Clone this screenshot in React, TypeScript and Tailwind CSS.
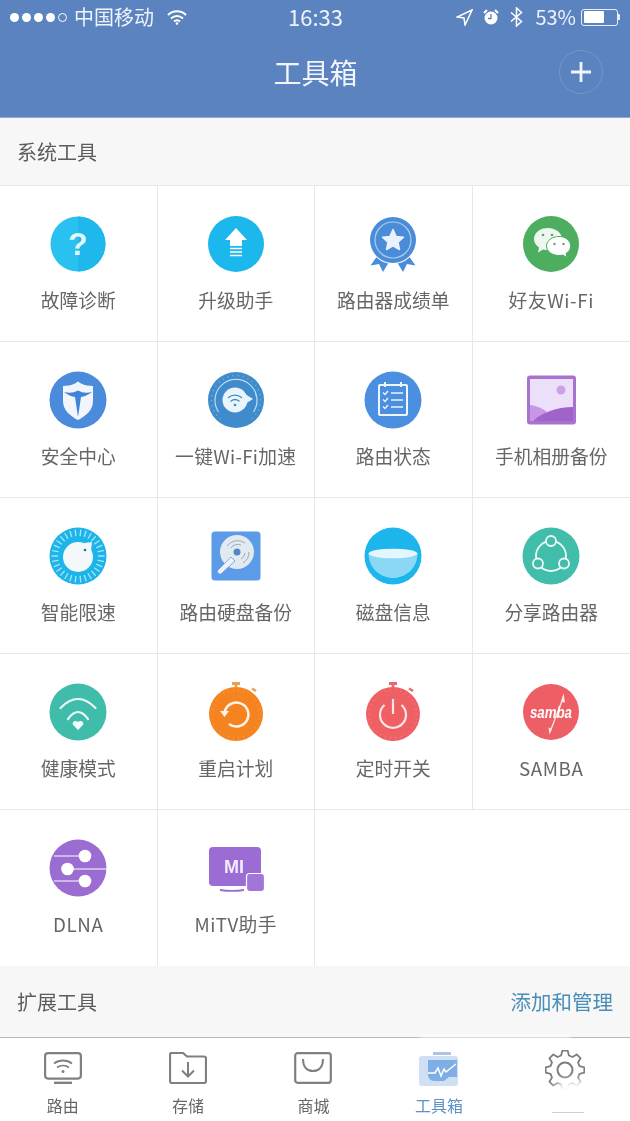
import React from "react";

const FONT = "font-['Noto_Sans_CJK_SC','Noto_Sans',sans-serif]";

function polar(cx: number, cy: number, r: number, deg: number): [number, number] {
  const a = (deg * Math.PI) / 180;
  return [cx + r * Math.cos(a), cy + r * Math.sin(a)];
}

function Ticks({ cx = 30, cy = 30, r1, r2, n, from = 0, to = 360, color = "#fff", w = 1, op = 1 }: { cx?: number; cy?: number; r1: number; r2: number; n: number; from?: number; to?: number; color?: string; w?: number; op?: number }) {
  return (
    <g stroke={color} strokeWidth={w} opacity={op} strokeLinecap="round">
      {Array.from({ length: n }).map((_, i) => {
        const d = from + ((to - from) * i) / n;
        const [x1, y1] = polar(cx, cy, r1, d);
        const [x2, y2] = polar(cx, cy, r2, d);
        return <line key={i} x1={x1} y1={y1} x2={x2} y2={y2} />;
      })}
    </g>
  );
}

function Svg({ children }: { children: React.ReactNode }) {
  return (
    <svg width="60" height="60" viewBox="0 0 60 60" className="block overflow-visible">
      {children}
    </svg>
  );
}

const icons: Record<string, React.ReactNode> = {
  help: (
    <Svg>
      <circle cx="30" cy="30" r="27.5" fill="#29c1ef" />
      <path d="M30 2.5a27.5 27.5 0 0 1 0 55z" fill="#1eb8ec" />
      <text x="30" y="41" textAnchor="middle" fontSize="32" fontWeight="700" fill="#e4f7fd" fontFamily="Liberation Sans, sans-serif">?</text>
    </Svg>
  ),
  up: (
    <Svg>
      <circle cx="30" cy="30" r="28" fill="#1cb7ec" />
      <path d="M30 14 41 26H36V32H24V26H19z" fill="#fff" />
      <path d="M24 34.5H36M24 38H36M24 41.5H36" stroke="#fff" strokeWidth="1.6" />
    </Svg>
  ),
  medal: (
    <Svg>
      <path d="M15 41 7.500 51.500 16 50 20 58 26 48z" fill="#4a8cd8" />
      <path d="M45 41 52.500 51.500 44 50 40 58 34 48z" fill="#4a8cd8" />
      <circle cx="30" cy="26" r="24" fill="#fff" />
      <circle cx="30" cy="26" r="23" fill="#4a8cd8" />
      <circle cx="30" cy="26" r="18" fill="none" stroke="#a9cdf3" strokeWidth="1.200" />
      <path d="M30 15.500 33.200 22.500 40.500 23.300 35 28.300 36.500 35.500 30 31.800 23.500 35.500 25 28.300 19.500 23.300 26.800 22.500z" fill="#e9f2fc" strokeLinejoin="round" stroke="#e9f2fc" strokeWidth="1.500" />
    </Svg>
  ),
  wechat: (
    <Svg>
      <circle cx="30" cy="30" r="28" fill="#4dae5f" />
      <path d="M27 14c-8 0-14 4.800-14 11 0 3.500 2 6.500 5 8.500l-1 5 5-3c1.600.4 3.300.6 5 .6 8 0 14-5 14-11s-6-11.100-14-11.100z" fill="#edf7ef" />
      <path d="M38 22.500c-7 0-12.500 4.200-12.500 9.500s5.500 9.500 12.500 9.500c1.300 0 2.600-.2 3.800-.5l4.200 2.500-1-4c2.900-1.800 4.700-4.500 4.700-7.500 0-5.300-5.700-9.500-10.700-9.500z" fill="#fff" stroke="#4dae5f" strokeWidth="1" />
      <circle cx="22" cy="21" r="1.300" fill="#56a868" />
      <circle cx="31" cy="21" r="1.300" fill="#56a868" />
      <circle cx="33.500" cy="30" r="1.200" fill="#56a868" />
      <circle cx="42.500" cy="30" r="1.200" fill="#56a868" />
    </Svg>
  ),
  shield: (
    <Svg>
      <circle cx="30" cy="30" r="28.500" fill="#4a8bdb" />
      <path d="M30 11.500l3 2c4 1.800 8 2.500 12 2.500v15c0 9-7 15-15 19-8-4-15-10-15-19V16c4 0 8-.7 12-2.500z" fill="#f2f6fc" />
      <path d="M16 22Q24 24 30 20.500 36 24 44 22 38 26.500 33 27L30 47 27 27Q22 26.500 16 22z" fill="#3f84d6" />
    </Svg>
  ),
  gauge: (
    <Svg>
      <circle cx="30" cy="30" r="28" fill="#3f8bcb" />
      <Ticks r1={24} r2={25} n={24} from={130} to={420} color="#9fd0ee" op={0.6} />
      <path d="M12.500 42A21 21 0 1 1 47.500 42" fill="none" stroke="#b9def4" strokeWidth="1.200" />
      <circle cx="29" cy="30" r="12.500" fill="#e9f5fb" />
      <path d="M39 24 47 29 39 34z" fill="#e9f5fb" />
      <path d="M22.500 27.500c3.800-3.200 9.200-3.200 13 0M25 31c2.400-1.900 5.600-1.900 8 0" fill="none" stroke="#3f8bcb" strokeWidth="1.400" strokeLinecap="round" />
      <circle cx="29" cy="35" r="1.300" fill="#3f8bcb" />
    </Svg>
  ),
  note: (
    <Svg>
      <circle cx="30" cy="30" r="28.500" fill="#4a8fe0" />
      <rect x="16" y="15" width="28" height="30" rx="1" fill="none" stroke="#eef5fc" strokeWidth="2" />
      <path d="M22 12V17M38 12V17" stroke="#eef5fc" strokeWidth="2" />
      <path d="M20 22.500 22 24.500 25 21M20 29.500 22 31.500 25 28M20 36.500 22 38.500 25 35" fill="none" stroke="#eef5fc" strokeWidth="1.400" />
      <path d="M28 23H40M28 30H40M28 37H40" stroke="#eef5fc" strokeWidth="1.500" />
    </Svg>
  ),
  photo: (
    <Svg>
      <rect x="6" y="5.500" width="49" height="49" rx="3" fill="#a873cf" />
      <rect x="9" y="9" width="43" height="42" fill="#ecdffa" />
      <circle cx="40" cy="20" r="4.500" fill="#c9a2e6" />
      <path d="M9 35c6 .5 12 3 17 7L12 51H9z" fill="#c796e6" />
      <path d="M12 51c8-8 24-14 40-14V51z" fill="#a063ca" />
    </Svg>
  ),
  limit: (
    <Svg>
      <circle cx="30" cy="30" r="28.500" fill="#1db4e9" />
      <Ticks r1={20.500} r2={26} n={30} color="#a9e5fa" w={1.300} />
      <circle cx="30" cy="31" r="15" fill="#f3f9fb" />
      <path d="M36 17 44 16 43 25z" fill="#f3f9fb" />
      <circle cx="37" cy="24" r="1.300" fill="#22718e" />
    </Svg>
  ),
  hdd: (
    <Svg>
      <rect x="5.500" y="5.500" width="49" height="49" rx="3.500" fill="#5b9be8" />
      <circle cx="31" cy="26" r="17" fill="#e2e9f0" />
      <path d="M21 20a13 13 0 0 1 18-3M43 26a13 13 0 0 1-6 11M25 22a8 8 0 0 1 10-3M39 27a8 8 0 0 1-4 6" fill="none" stroke="#98aabd" strokeWidth="1" />
      <circle cx="31" cy="26" r="3.500" fill="#5388c8" />
      <path d="M25 31 29 35 15.500 47.500c-2 1.800-5.500-1.500-3.500-3.500z" fill="#eef2f6" stroke="#5b9be8" strokeWidth=".8" />
    </Svg>
  ),
  bowl: (
    <Svg>
      <circle cx="30" cy="30" r="28.500" fill="#1cb6ec" />
      <path d="M5.500 28C10 24 50 24 54.500 28 54 43 42 52 30 52S6 43 5.500 28z" fill="#8bd8f6" />
      <ellipse cx="30" cy="27.500" rx="24.500" ry="4.800" fill="#e3f6fd" />
    </Svg>
  ),
  share: (
    <Svg>
      <circle cx="30" cy="30" r="28.500" fill="#40bdab" />
      <circle cx="30" cy="30" r="15" fill="none" stroke="#effaf8" strokeWidth="1.800" />
      <circle cx="30" cy="15" r="5" fill="#43bcab" stroke="#effaf8" strokeWidth="1.800" />
      <circle cx="17" cy="37.500" r="5" fill="#43bcab" stroke="#effaf8" strokeWidth="1.800" />
      <circle cx="43" cy="37.500" r="5" fill="#43bcab" stroke="#effaf8" strokeWidth="1.800" />
    </Svg>
  ),
  health: (
    <Svg>
      <circle cx="30" cy="30" r="28.500" fill="#40bcab" />
      <path d="M12.500 26Q30 8 47.500 26M20 37Q30 23 40 37" fill="none" stroke="#eefaf7" strokeWidth="2.200" strokeLinecap="round" />
      <path d="M30 48 25.200 43c-2-3 2.300-5.500 4.800-3 2.500-2.500 6.800 0 4.800 3z" fill="#f6fcfb" />
    </Svg>
  ),
  restart: (
    <Svg>
      <path d="M26 1.500H34M30 1.500V5" stroke="#e9a054" strokeWidth="2.800" />
      <path d="M46 6.500 50 9" stroke="#e9a054" strokeWidth="2.500" />
      <circle cx="30" cy="32" r="27" fill="#f58420" />
      <Ticks cy={32} r1={23} r2={24.500} n={30} color="#fbc48f" w={.8} op={0.35} />
      <path d="M18.500 31A12 12 0 1 1 23 42" fill="none" stroke="#fdf3e8" strokeWidth="2.500" />
      <path d="M14 29 23 29 18.500 35z" fill="#fdf3e8" />
    </Svg>
  ),
  timer: (
    <Svg>
      <path d="M26 1.500H34M30 1.500V5" stroke="#e46b70" strokeWidth="2.800" />
      <path d="M46 6.500 50 9" stroke="#e46b70" strokeWidth="2.500" />
      <circle cx="30" cy="32" r="27" fill="#ef6064" />
      <Ticks cy={32} r1={23} r2={24.500} n={30} color="#f9b1b3" w={.8} op={0.35} />
      <path d="M21.500 23A13 13 0 1 0 38.500 23" fill="none" stroke="#fbe6e6" strokeWidth="2.200" />
      <path d="M30 17V32" stroke="#fbe6e6" strokeWidth="2.200" />
    </Svg>
  ),
  samba: (
    <Svg>
      <circle cx="30" cy="30" r="28" fill="#ee5f65" />
      <path d="M42.500 15 29 50" stroke="#fbe7e8" strokeWidth="1.300" />
      <path d="M42.500 11 40 20 44 20.500zM28.500 52.500 27.500 45.500 31 46.500z" fill="#fbe7e8" />
      <text x="30" y="36" textAnchor="middle" fontSize="17" fontWeight="700" fontStyle="italic" fill="#fff" textLength="42" lengthAdjust="spacingAndGlyphs" fontFamily="Liberation Sans, sans-serif">samba</text>
    </Svg>
  ),
  dlna: (
    <Svg>
      <circle cx="30" cy="30" r="28.500" fill="#9b6dd2" />
      <path d="M6 18H37M19 31H59M6 43H37" stroke="#fff" strokeWidth="1.200" />
      <circle cx="37" cy="18" r="6.300" fill="#fff" />
      <circle cx="19.500" cy="31" r="6.300" fill="#fff" />
      <circle cx="37" cy="43" r="6.300" fill="#fff" />
    </Svg>
  ),
  mitv: (
    <Svg>
      <rect x="3" y="9" width="52" height="39" rx="4" fill="#9a6cd4" />
      <path d="M14 52c8 1.200 16 1.200 24 0" stroke="#9a6cd4" strokeWidth="1.800" fill="none" />
      <rect x="40.500" y="35.500" width="18" height="18" rx="3" fill="#a276d8" stroke="#fff" strokeWidth="1.200" />
      <text x="28" y="35" textAnchor="middle" fontSize="18" fontWeight="700" fill="#f3ecfb" textLength="20" lengthAdjust="spacingAndGlyphs" fontFamily="Liberation Sans, sans-serif">MI</text>
    </Svg>
  ),
};

const tools: { label: string; icon: string; track?: string }[] = [
  { label: "故障诊断", icon: "help" },
  { label: "升级助手", icon: "up" },
  { label: "路由器成绩单", icon: "medal" },
  { label: "好友Wi-Fi", icon: "wechat", track: "tracking-[0.6px]" },
  { label: "安全中心", icon: "shield" },
  { label: "一键Wi-Fi加速", icon: "gauge", track: "tracking-[0.3px]" },
  { label: "路由状态", icon: "note" },
  { label: "手机相册备份", icon: "photo" },
  { label: "智能限速", icon: "limit" },
  { label: "路由硬盘备份", icon: "hdd" },
  { label: "磁盘信息", icon: "bowl" },
  { label: "分享路由器", icon: "share" },
  { label: "健康模式", icon: "health" },
  { label: "重启计划", icon: "restart" },
  { label: "定时开关", icon: "timer" },
  { label: "SAMBA", icon: "samba", track: "tracking-[0.6px]" },
  { label: "DLNA", icon: "dlna", track: "tracking-[0.6px]" },
  { label: "MiTV助手", icon: "mitv", track: "tracking-[0.4px]" },
];

function StatusBar() {
  return (
    <div className="grid h-[34px] grid-cols-[1fr_auto_1fr] items-center px-[10px] text-[19px] leading-none text-[#eef3fa]">
      <div className="flex items-center">
        <div className="flex items-center gap-[3px]">
          {[0, 1, 2, 3].map((i) => (
            <span key={i} className="h-[9px] w-[9px] rounded-full bg-white" />
          ))}
          <span className="h-[9px] w-[9px] rounded-full border border-white" />
        </div>
        <span className="ml-[7px] text-[20px]">中国移动</span>
        <svg width="20" height="16" viewBox="0 0 20 16" className="ml-[13px]">
          <path d="M1 6c5-5 13-5 18 0M4 9.500c3.500-3.200 8.500-3.200 12 0M7 12.500c1.800-1.500 4.200-1.500 6 0" fill="none" stroke="#fff" strokeWidth="2" />
          <circle cx="10" cy="14.500" r="1.300" fill="#fff" />
        </svg>
      </div>
      <div className="-mt-[3px] ml-px text-[22px] font-normal">16:33</div>
      <div className="flex items-center justify-end">
        <svg width="17" height="17" viewBox="0 0 17 17">
          <path d="M16 1 1 8l7 1 1 7z" fill="none" stroke="#fff" strokeWidth="1.500" />
        </svg>
        <svg width="16" height="17" viewBox="0 0 16 17" className="ml-[10px]">
          <circle cx="8" cy="9" r="6.500" fill="#fff" />
          <path d="M8 5V9.500H5" fill="none" stroke="#5b83c0" strokeWidth="1.300" />
          <path d="M1 4 4 1M15 4 12 1" stroke="#fff" strokeWidth="2" />
        </svg>
        <svg width="13" height="20" viewBox="0 0 13 20" className="ml-[11px]">
          <path d="M1 5.500 11.500 14.500 6.500 19V1l5 4.500L1 14.500" fill="none" stroke="#fff" strokeWidth="1.500" />
        </svg>
        <span className="ml-[12px] text-[20px]">53%</span>
        <div className="ml-[5px] flex items-center">
          <div className="h-[17px] w-[37px] rounded-[3px] border border-[#e8eef7] p-[1.500px]">
            <div className="h-full w-[20px] rounded-[1px] bg-white" />
          </div>
          <div className="h-[6px] w-[2px] rounded-r-[1px] bg-[#e8eef7]" />
        </div>
      </div>
    </div>
  );
}

function SectionHeader({ title, action }: { title: string; action?: string }) {
  return (
    <div className={`flex h-full items-center justify-between bg-[#f7f7f7] px-[17px] text-[20px] leading-none ${action ? "" : "pt-px"}`}>
      <span className="text-[#5c5c5c]">{title}</span>
      {action && <span className="text-[20.500px] text-[#4a8db7]">{action}</span>}
    </div>
  );
}

function Cell({ label, icon, index, track }: { label: string; icon: string; index: number; track?: string }) {
  const lastCol = index % 4 === 3;
  const inLastRow = index >= 16;
  return (
    <div className={`flex h-[156px] flex-col items-center pt-[28px] ${lastCol ? "" : "border-r border-[#e8e8e8]"} ${inLastRow ? "" : "border-b border-[#e8e8e8]"}`}>
      {icons[icon]}
      <div className={`mt-[14px] whitespace-nowrap text-[18.750px] leading-[24px] text-[#666] ${track ?? ""}`}>{label}</div>
    </div>
  );
}

function Gear() {
  const teeth = 8;
  const pts: string[] = [];
  for (let i = 0; i < teeth; i++) {
    const base = (360 / teeth) * i - 90;
    [-15, -8, 8, 15].forEach((d, k) => {
      const rr = k === 0 || k === 3 ? 15 : 19.500;
      const [x, y] = polar(20, 20, rr, base + d);
      pts.push(`${x.toFixed(1)},${y.toFixed(1)}`);
    });
  }
  return (
    <svg width="40" height="40" viewBox="0 0 40 40" className="-mt-[2px] ml-[2px]">
      <polygon points={pts.join(" ")} fill="none" stroke="#7d7d7d" strokeWidth="1.800" strokeLinejoin="round" />
      <circle cx="20" cy="20" r="7.500" fill="none" stroke="#7d7d7d" strokeWidth="2" />
    </svg>
  );
}

function Tab({ label, children, active }: { label?: string; children: React.ReactNode; active?: boolean }) {
  return (
    <div className="flex flex-col items-center">
      <div className="flex h-[40px] items-start justify-center">{children}</div>
      <div className={`mt-px h-[24px] text-[16px] leading-[24px] ${active ? "text-[#5f92c4]" : "text-[#666]"}`}>{label}</div>
    </div>
  );
}

export default function App() {
  return (
    <div className={`relative flex h-[1121px] w-[630px] flex-col overflow-hidden bg-white blur-[0.4px] ${FONT}`}>
      <header className="h-[118px] shrink-0 border-b border-[#8fa9d2] bg-[#5b83c0]">
        <StatusBar />
        <div className="grid h-[75px] grid-cols-[1fr_auto_1fr] items-center pl-[28px] pr-[27px]">
          <div />
          <h1 className="text-[28px] leading-none font-normal text-[#f2f5fb]">工具箱</h1>
          <div className="flex justify-end">
            <div className="flex h-[44px] w-[44px] items-center justify-center rounded-full border border-[#7496cc]">
              <svg width="20" height="20" viewBox="0 0 20 20">
                <path d="M10 0V20M0 10H20" stroke="#f2f5fb" strokeWidth="2.800" />
              </svg>
            </div>
          </div>
        </div>
      </header>

      <div className="h-[67px] shrink-0">
        <SectionHeader title="系统工具" />
      </div>

      <div className="grid shrink-0 grid-cols-4 border-t border-[#e8e8e8]">
        {tools.map((t, i) => (
          <Cell key={t.label} label={t.label} icon={t.icon} index={i} track={t.track} />
        ))}
        <div className="h-[156px]" />
        <div className="h-[156px]" />
      </div>

      <div className="h-[71px] shrink-0">
        <SectionHeader title="扩展工具" action="添加和管理" />
      </div>

      <nav className="grid flex-1 grid-cols-5 border-t border-[#b8b8b8] bg-white pr-[3px] pt-[14px]">
        <Tab label="路由">
          <svg width="38" height="32" viewBox="0 0 38 32">
            <rect x="1.100" y="1.100" width="35.800" height="25.500" rx="3" fill="none" stroke="#808080" strokeWidth="2.200" />
            <path d="M10 30.800H28" stroke="#808080" strokeWidth="2.400" />
            <path d="M10 11.500c5-4 13-4 18 0M13 15.500c3.500-2.500 8.500-2.500 12 0" fill="none" stroke="#808080" strokeWidth="1.800" />
            <circle cx="19" cy="19.500" r="1.500" fill="#808080" />
          </svg>
        </Tab>
        <Tab label="存储">
          <svg width="38" height="32" viewBox="0 0 38 32">
            <path d="M2 1H14L18 4.500H35a2 2 0 0 1 2 2V29a2 2 0 0 1-2 2H3a2 2 0 0 1-2-2V2z" fill="none" stroke="#808080" strokeWidth="2.200" />
            <path d="M19 10V24M13 18.500 19 24.500 25 18.500" fill="none" stroke="#808080" strokeWidth="2" />
          </svg>
        </Tab>
        <Tab label="商城">
          <svg width="38" height="32" viewBox="0 0 38 32">
            <rect x="1.200" y="1.200" width="35.600" height="29.600" rx="2.500" fill="none" stroke="#808080" strokeWidth="2.200" />
            <path d="M9 7c0 8 4 12 10 12s10-4 10-12" fill="none" stroke="#808080" strokeWidth="2" />
          </svg>
        </Tab>
        <Tab label="工具箱" active>
          <svg width="40" height="34" viewBox="0 0 40 34">
            <rect x="0" y="4" width="39" height="30" rx="3" fill="#cfe0f4" />
            <path d="M14 0H32V3H14z" fill="#a9c4e6" />
            <path d="M9 8H38V25H30l-5 4H15c-3 0-6-3-6-6z" fill="#7faee6" />
            <path d="M9 21H16L19 16 22 24 25 17 27 20 37 12" fill="none" stroke="#fff" strokeWidth="1.500" />
          </svg>
        </Tab>
        <Tab>
          <Gear />
        </Tab>
      </nav>

      <div className="absolute left-[552px] top-[1080px] h-[32px] w-[56px] rounded-full bg-white blur-[4px]" />
      <div className="absolute left-[420px] top-[1034px] h-[5px] w-[150px] bg-white/70 blur-[2px]" />
      <div className="absolute left-[552px] top-[1112px] h-px w-[32px] bg-[#cfcfcf]" />
    </div>
  );
}
